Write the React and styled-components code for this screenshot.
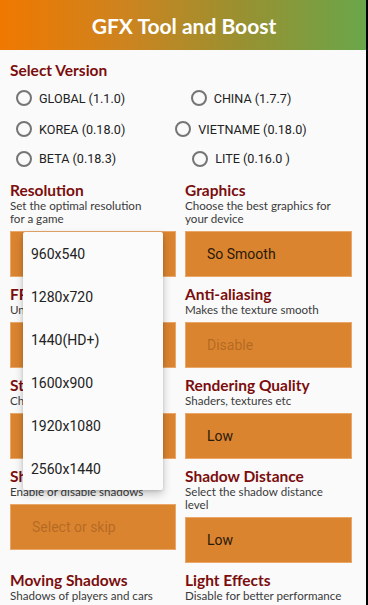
import React from "react";
import styled, { createGlobalStyle } from "styled-components";

const GlobalStyle = createGlobalStyle`
  body {
    margin: 0;
    background: #000;
    font-family: Roboto, "Liberation Sans", sans-serif;
  }
`;

const versions = [
  ["GLOBAL (1.1.0)", "CHINA (1.7.7)"],
  ["KOREA (0.18.0)", "VIETNAME (0.18.0)"],
  ["BETA (0.18.3)", "LITE (0.16.0 )"],
];

const resolutions = [
  "960x540",
  "1280x720",
  "1440(HD+)",
  "1600x900",
  "1920x1080",
  "2560x1440",
];

const settings = [
  { title: "Resolution", sub: "Set the optimal resolution\nfor a game", value: "", menu: true },
  { title: "Graphics", sub: "Choose the best graphics for\nyour device", value: "So Smooth" },
  { title: "FPS", sub: "Unlock the max frame rate", value: "" },
  { title: "Anti-aliasing", sub: "Makes the texture smooth", value: "Disable", hint: true },
  { title: "Style", sub: "Change the color style of your", value: "" },
  { title: "Rendering Quality", sub: "Shaders, textures etc", value: "Low" },
  { title: "Shadows", sub: "Enable or disable shadows", value: "Select or skip", hint: true },
  { title: "Shadow Distance", sub: "Select the shadow distance\nlevel", value: "Low" },
  { title: "Moving Shadows", sub: "Shadows of players and cars", value: "" },
  { title: "Light Effects", sub: "Disable for better performance", value: "" },
];

const App = () => {
  return (
    <Page>
      <GlobalStyle />
      <Header>GFX Tool and Boost</Header>
      <Body>
        <SectionTitle>Select Version</SectionTitle>
        <RadioGrid>
          {versions.map((row) =>
            row.map((label, i) => (
              <Radio key={label} $right={i === 1}>
                <Circle />
                {label}
              </Radio>
            ))
          )}
        </RadioGrid>

        <SettingsGrid>
          {settings.map((s) => (
            <Setting key={s.title}>
              <SectionTitle>{s.title}</SectionTitle>
              <Sub>{s.sub}</Sub>
              <Field $hint={s.hint}>
                {s.value}
                {s.menu && (
                  <Menu>
                    {resolutions.map((r) => (
                      <MenuItem key={r}>{r}</MenuItem>
                    ))}
                  </Menu>
                )}
              </Field>
            </Setting>
          ))}
        </SettingsGrid>
      </Body>
    </Page>
  );
};

const Page = styled.div`
  width: 366px;
  height: 605px;
  overflow: hidden;
  background: #fafafa;
`;

const Header = styled.div`
  height: 50px;
  display: flex;
  align-items: center;
  justify-content: center;
  padding-left: 2px;
  background: linear-gradient(90deg, #f07800 0%, #cc8420 35%, #9a9030 65%, #6aa64a 100%);
  color: #fff;
  font-family: Lato, "Open Sans", sans-serif;
  font-weight: 700;
  font-size: 21px;
`;

const Body = styled.div`
  padding: 11px 14px 0 10px;
`;

const SectionTitle = styled.div`
  color: #7b0d0d;
  font-family: Lato, "Open Sans", sans-serif;
  font-weight: 700;
  font-size: 15.5px;
  line-height: 18px;
  white-space: nowrap;
`;

const RadioGrid = styled.div`
  width: 300px;
  margin: 3px 0 0 6px;
  display: grid;
  grid-template-columns: 1fr 1fr;
  grid-template-rows: 32px 30px 29px;
  align-items: center;
`;

const Radio = styled.div`
  display: flex;
  align-items: center;
  gap: 7px;
  justify-self: ${(p) => (p.$right ? "center" : "start")};
  font-size: 12.6px;
  color: #222;
  white-space: nowrap;
`;

const Circle = styled.span`
  width: 12px;
  height: 12px;
  border: 2px solid #757575;
  border-radius: 50%;
`;

const SettingsGrid = styled.div`
  margin-top: 8px;
  display: grid;
  grid-template-columns: 166px 167px;
  column-gap: 9px;
  row-gap: 8px;
  align-items: start;
`;

const Setting = styled.div`
  display: flex;
  flex-direction: column;
`;

const Sub = styled.div`
  color: #3a3a3a;
  font-family: Lato, "Open Sans", sans-serif;
  font-size: 11.6px;
  line-height: 13px;
  white-space: pre-line;
`;

const Field = styled.div`
  position: relative;
  margin-top: 6px;
  height: 46px;
  box-sizing: border-box;
  display: flex;
  align-items: center;
  padding-left: 21px;
  background: #da8430;
  border: 1px solid #e9a86a;
  font-size: 14px;
  color: ${(p) => (p.$hint ? "rgba(110, 55, 10, 0.35)" : "#2a1808")};
`;

const Menu = styled.div`
  position: absolute;
  top: 0;
  left: 12px;
  width: 140px;
  z-index: 5;
  background: #fbfbfb;
  border-radius: 2px;
  box-shadow: 0 4px 10px rgba(0, 0, 0, 0.22), 0 1px 3px rgba(0, 0, 0, 0.12);
`;

const MenuItem = styled.div`
  height: 43px;
  display: flex;
  align-items: center;
  padding-left: 8px;
  font-size: 14px;
  color: #222;
`;

export default App;
